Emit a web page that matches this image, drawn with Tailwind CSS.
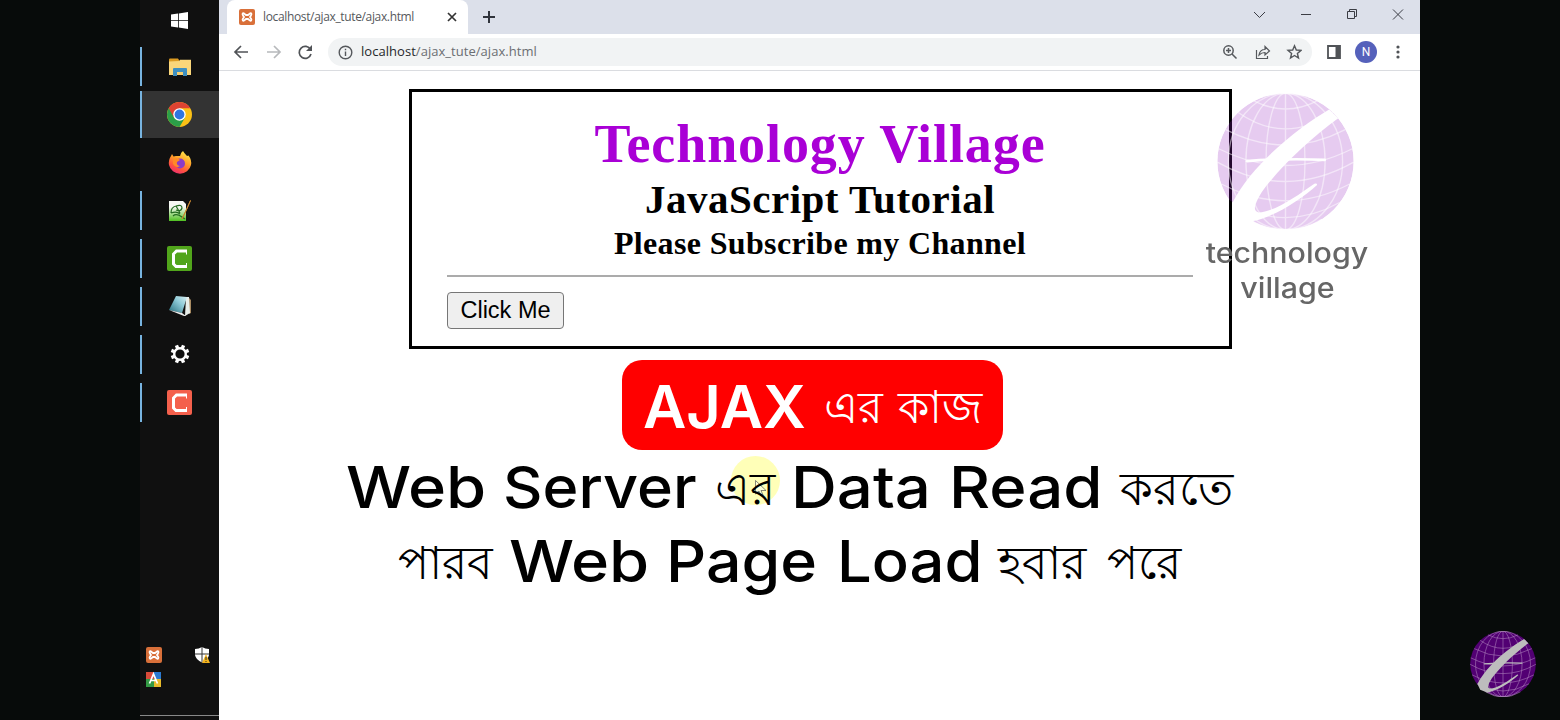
<!DOCTYPE html>
<html lang="en">
<head>
<meta charset="utf-8">
<title>localhost/ajax_tute/ajax.html</title>
<script src="https://cdn.jsdelivr.net/npm/@tailwindcss/browser@4"></script>
</head>
<body class="w-[1560px] h-[720px] overflow-hidden bg-[#070b0a] relative flex">

<svg class="absolute w-0 h-0">
  <defs>
    <g id="grid" fill="none">
      <ellipse cx="203" cy="203" rx="58" ry="203"/><ellipse cx="203" cy="203" rx="118" ry="203"/><ellipse cx="203" cy="203" rx="170" ry="203"/>
      <path d="M203 0V406M110 23Q203 70 296 23M62 57Q203 155 344 57M25 108Q203 200 381 108M4 165Q203 265 402 165M0 205Q203 320 406 205M12 270Q203 370 394 270M42 325Q203 415 364 325M95 375Q203 440 311 375"/>
    </g>
    <g id="swoosh">
      <path d="M333 48C248 98 104 208 45 326L62 362L108 380C168 368 248 318 297 273Q298 267 289 269C238 305 168 354 123 355C103 350 112 328 133 293C188 218 278 133 360 74Z"/>
      <path d="M88 198Q200 189 321 194Q327 198 321 202Q200 197 88 206Q80 202 88 198Z"/>
    </g>
    <mask id="cut"><circle cx="203" cy="203" r="203" fill="#fff"/><use href="#swoosh" fill="#000"/><path d="M40 320L110 380L80 400L20 350Z" fill="#000"/></mask>
    <g id="xampp"><rect width="16" height="16" rx="2" fill="#d9703a"/><path d="M5.200 4.600C3.800 3.600 3 5 4 6.400L5 8L4 9.600C3 11.200 4 12.400 5.300 11.400L7 10H9L10.700 11.400C12 12.400 13 11.200 12 9.600L11 8L12 6.400C13 5 12.200 3.600 10.800 4.600L9 6H7Z" fill="none" stroke="#fff" stroke-width="1.800"/></g>
    <g id="camtasia"><path d="M20 5H9.500L6.500 8V18L9 20.500H20" fill="none" stroke="#fff" stroke-width="3"/><path d="M19.500 5V8.500M19.500 17V20.500" stroke="#fff" stroke-width="1"/></g>
  </defs>
</svg>

<!-- Taskbar -->
<aside class="ml-[140px] w-[79px] h-full bg-[#101010] shrink-0 flex flex-col">
  <div class="h-[43px] flex justify-center items-center">
    <svg class="w-[17px] h-[17px] -mt-[3px]" viewBox="0 0 17 17" fill="#fff"><path d="M0 2.500L7 1.500V8H0ZM7.800 1.400L17 0V8H7.800ZM0 8.800H7V15.500L0 14.500ZM7.800 8.800H17V17L7.800 15.600Z"/></svg>
  </div>
  <div class="h-12 flex items-center justify-center relative">
    <span class="absolute left-0 top-1 w-0.5 h-[39px] bg-[#78b4e0]"></span>
    <svg class="w-[22px] h-[19px]" viewBox="0 0 22 19"><path d="M0 1.500Q0 .5 1 .5H9L10 2V17H0Z" fill="#dc9b22"/><path d="M0 3.500L10 3L11 1.800H22V17H0Z" fill="#fad67a"/><path d="M4 18V11Q4 10 5 10H17Q18 10 18 11V18H14V14H8V18Z" fill="#3e8fc0"/><path d="M8 17V14H14V17Z" fill="#f6cf70"/></svg>
  </div>
  <div class="h-[47px] flex items-center justify-center bg-[#333] relative">
    <span class="absolute left-0 top-0 w-0.5 h-full bg-[#78b4e0]"></span>
    <svg class="w-[25px] h-[25px]" viewBox="0 0 24 24"><circle cx="12" cy="12" r="12" fill="#fbc116"/><path d="M12 12L1.610 6A12 12 0 0 0 12 24L17.200 15Z" fill="#2b9f48"/><path d="M12 6H22.400A12 12 0 0 0 1.610 6L6.800 15L12 12Z" fill="#dd4332"/><circle cx="12" cy="12" r="6" fill="#fff"/><circle cx="12" cy="12" r="4.700" fill="#2f75e0"/></svg>
  </div>
  <div class="h-12 flex items-center justify-center pt-0.5">
    <svg class="w-6 h-6" viewBox="0 0 24 24"><defs><linearGradient id="fx" x1=".8" y1="0" x2=".3" y2="1"><stop offset="0" stop-color="#fff04e"/><stop offset=".45" stop-color="#ff9a28"/><stop offset=".75" stop-color="#ff5140"/><stop offset="1" stop-color="#ec2f70"/></linearGradient></defs><path d="M15 0Q16 2 19 5L20.500 4.500Q24 9 23 14A11.300 11.300 0 0 1 1 14Q.2 9 3 5L4 3L5.500 5.500L8 5Q11 5 12 5Q13 1 15 0Z" fill="url(#fx)"/><circle cx="12" cy="12.500" r="5" fill="#8a3bc8"/><path d="M5 8Q10 6 12 9L9 11Q8 14 12 15Q8 18 5 13Z" fill="#ff8a26"/></svg>
  </div>
  <div class="h-12 flex items-center justify-center relative pt-0.5">
    <span class="absolute left-0 top-[5px] w-0.5 h-[39px] bg-[#78b4e0]"></span>
    <svg class="w-6 h-[22px]" viewBox="0 0 24 22"><defs><linearGradient id="np" x1="0" y1="0" x2="0" y2="1"><stop offset=".3" stop-color="#f6f8f4"/><stop offset="1" stop-color="#4fc020"/></linearGradient></defs><path d="M1 1H15L18 4V21H1Z" fill="url(#np)"/><path d="M3 13Q3 7 8 6Q14 4 14 8Q13 12 8 10M3 13Q9 11 12 14M8 6L12 13M5 16Q8 13 14 17L17 19" fill="none" stroke="#246b20" stroke-width="1.200"/><path d="M22.500 .5L15 17L14 19L17.500 12Z" fill="#d89434" stroke="#c98630"/></svg>
  </div>
  <div class="h-12 flex items-center justify-center relative">
    <span class="absolute left-0 top-[5px] w-0.5 h-[39px] bg-[#78b4e0]"></span>
    <svg class="w-[25px] h-[25px]" viewBox="0 0 25 25"><rect width="25" height="25" rx="2" fill="#51a51b"/><use href="#camtasia"/></svg>
  </div>
  <div class="h-12 flex items-center justify-center relative">
    <span class="absolute left-0 top-[5px] w-0.5 h-[39px] bg-[#78b4e0]"></span>
    <svg class="w-[22px] h-[22px]" viewBox="0 0 22 22"><defs><linearGradient id="nt" x1="0" y1="1" x2="1" y2="0"><stop offset="0" stop-color="#256d7c"/><stop offset=".6" stop-color="#8fcbd8"/><stop offset="1" stop-color="#d9f0f2"/></linearGradient></defs><path d="M20 3L22 5V18L20 19Z" fill="#a98b62"/><path d="M17 2H20L21 18L16 21Z" fill="#e8eeea"/><path d="M7 1L18 2L13 18L0 15Z" fill="url(#nt)"/><path d="M0 15L13 18L17 21L15 21Z" fill="#eee"/></svg>
  </div>
  <div class="h-12 flex items-center justify-center relative">
    <span class="absolute left-0 top-[5px] w-0.5 h-[39px] bg-[#78b4e0]"></span>
    <svg class="w-5 h-5" viewBox="-10 -10 20 20" fill="none" stroke="#fff"><circle r="5.800" stroke-width="2.400"/><g stroke-width="3.400"><path d="M0 -6V-9.300M0 6V9.300M6 0H9.300M-6 0H-9.300" transform="rotate(22.500)"/><path d="M0 -6V-9.300M0 6V9.300M6 0H9.300M-6 0H-9.300" transform="rotate(67.500)"/></g></svg>
  </div>
  <div class="h-12 flex items-center justify-center relative">
    <span class="absolute left-0 top-[5px] w-0.5 h-[39px] bg-[#78b4e0]"></span>
    <svg class="w-[25px] h-[25px]" viewBox="0 0 25 25"><rect width="25" height="25" rx="2" fill="#f4604c"/><use href="#camtasia"/></svg>
  </div>
  <div class="mt-auto mb-7 px-1.5 grid grid-cols-[48px_16px] gap-y-2">
    <svg class="w-4 h-4" viewBox="0 0 16 16"><use href="#xampp"/></svg>
    <svg class="w-4 h-4" viewBox="0 0 16 16"><path d="M8 0Q11 2 15 2V8Q14 13 8 15.500Q2 13 1 8V2Q5 2 8 0Z" fill="#fff"/><path d="M8 0V16M1 7H15" stroke="#333"/><path d="M12 7L16 16H8Z" fill="#f3b31e"/><path d="M12 10V13M12 14V15" stroke="#332"/></svg>
    <svg class="w-4 h-4" viewBox="0 0 16 16"><path d="M0 1H8V8H0Z" fill="#d94b3a"/><path d="M8 1H15V8H8Z" fill="#2b79cf"/><path d="M0 8H8V16H0Z" fill="#349a45"/><path d="M8 8H15V16H8Z" fill="#e8ba2a"/><path d="M3.500 12.500L7.500 3L11.500 12.500M5 9.500H10" fill="none" stroke="#fff" stroke-width="1.700"/></svg>
  </div>
  <div class="h-[5px] border-t border-[#888] shrink-0"></div>
</aside>

<!-- Browser window -->
<section class="w-[1201px] h-full bg-white shrink-0 flex flex-col">
  <div class="h-[34px] bg-[#dce0ea] flex items-start shrink-0">
    <div class="ml-2 w-[241px] h-full bg-white rounded-t-lg flex items-center pl-3 pr-[11px]">
      <svg class="w-4 h-4 shrink-0" viewBox="0 0 16 16"><use href="#xampp"/></svg>
      <span class="ml-2 text-[12px] tracking-[-0.350px] text-[#55585c] font-['Open_Sans',sans-serif] whitespace-nowrap">localhost/ajax_tute/ajax.html</span>
      <svg class="ml-auto w-2.5 h-2.5 shrink-0" viewBox="0 0 10 10" stroke="#333" stroke-width="1.700"><path d="M1 1L9 9M9 1L1 9"/></svg>
    </div>
    <svg class="ml-[15px] mt-[11px] w-3 h-3" viewBox="0 0 12 12" stroke="#30343c" stroke-width="2"><path d="M6 0V12M0 6H12"/></svg>
    <svg class="ml-auto mr-3.5 mt-2 w-[158px] h-3" viewBox="0 0 158 12" fill="none" stroke="#3b3d44"><path d="M6 4L11.500 9.500L17 4M53 6.500H63M99.500 3.500H106.500V10.500H99.500ZM101.500 3V1.500H108.500V8.500H107M145 1.500L155 11.500M155 1.500L145 11.500"/></svg>
  </div>
  <div class="h-[37px] border-b border-[#dadce0] flex items-center shrink-0">
    <svg class="ml-[14px] w-20 h-4" viewBox="0 0 80 16" fill="none" stroke-width="1.700"><path d="M15 8H2M8 2L2 8L8 14" stroke="#505357"/><path d="M34 8H47M41 2L47 8L41 14" stroke="#b7b9bc"/><path d="M77.500 5.500A6 6 0 1 0 78 10" stroke="#505357"/><path d="M79 1V7H73Z" fill="#505357"/></svg>
    <div class="ml-[15px] w-[984px] h-7 rounded-full bg-[#f1f3f4] flex items-center pl-2.5 pr-2.5">
      <svg class="w-[15px] h-[15px]" viewBox="0 0 15 15" fill="none" stroke="#55585c" stroke-width="1.400"><circle cx="7.500" cy="7.500" r="6.300"/><path d="M7.500 6.500V11M7.500 3.800V5.300"/></svg>
      <span class="ml-2 text-[13px] text-[#6b6e72] font-['Open_Sans',sans-serif] tracking-[0.040px] whitespace-nowrap"><span class="text-[#26282b]">localhost</span>/ajax_tute/ajax.html</span>
      <svg class="ml-auto w-20 h-4" viewBox="0 0 80 16" fill="none" stroke="#55585c" stroke-width="1.500"><circle cx="6.500" cy="6.500" r="4.700"/><path d="M10 10L14.500 14.500M4 6.500H9M6.500 4V9"/><path d="M34.500 6V14.500H45.500V12M37 11Q38 5.500 43 5.500V2.500L47.500 7L43 11V8.500Q39.500 8.500 37 11Z" stroke-width="1.200"/><path d="M72.500 1.800L74.300 6L79 6.400L75.400 9.400L76.500 14L72.500 11.500L68.500 14L69.600 9.400L66 6.400L70.700 6Z" stroke-width="1.400"/></svg>
    </div>
    <svg class="ml-[15px] w-3.5 h-3.5" viewBox="0 0 14 14"><path d="M1 1H13V13H1Z" fill="none" stroke="#505357" stroke-width="1.800"/><path d="M8.500 1H13V13H8.500Z" fill="#505357"/></svg>
    <span class="ml-3.5 w-[22px] h-[22px] rounded-full bg-[#5561bb] text-white text-[12px] flex items-center justify-center font-['Roboto',sans-serif]">N</span>
    <svg class="ml-[19px] w-1 h-3.5" viewBox="0 0 4 14" fill="#505357"><circle cx="2" cy="2" r="1.600"/><circle cx="2" cy="7" r="1.600"/><circle cx="2" cy="12" r="1.600"/></svg>
  </div>

  <main class="flex flex-col pt-[18px]">
    <div class="ml-[190px] w-[823px] h-[260px] border-[3px] border-black pl-[35px] pr-9 pt-6 flex flex-col font-['Liberation_Serif',serif] font-bold text-center text-black">
      <h1 class="text-[54px] leading-[56px] tracking-[0.920px] text-[#a900d6] whitespace-nowrap">Technology Village</h1>
      <h2 class="text-[41px] leading-[54px] tracking-[0.500px] whitespace-nowrap">JavaScript Tutorial</h2>
      <h3 class="-mt-px text-[32px] leading-9 tracking-[0.350px] whitespace-nowrap">Please Subscribe my Channel</h3>
      <div class="mt-[14px] h-0.5 bg-[#ababab] shrink-0"></div>
      <button class="mt-[15px] w-[117px] h-[37px] border border-[#767676] rounded bg-[#efefef] font-['Liberation_Sans',sans-serif] font-normal text-[23.500px] shrink-0">Click Me</button>
    </div>
    <div class="mt-[11px] ml-[403px] w-[381px] h-[90px] bg-[#ff0000] rounded-[20px] flex items-center pl-[21px] text-white font-['Inter','Noto_Sans',sans-serif] whitespace-nowrap">
      <span class="w-[181px] pt-1 text-[59px] font-semibold origin-left scale-x-[1.01]">AJAX</span><span class="w-[74px] pt-1 text-[45px] font-medium">এর</span><span class="pt-1 text-[45px] font-medium">কাজ</span>
    </div>
    <div class="relative">
      <div class="absolute left-[512px] top-[6px] w-[49px] h-[49px] rounded-full bg-[#ffffb8]"></div>
      <svg class="absolute left-[536px] top-[30px] w-3 h-[17px]" viewBox="0 0 12 17"><path d="M.5 .5V14L4 11L6 16L8 15L6 10.500H11Z" fill="#ffffd8" stroke="#555" stroke-width=".7"/></svg>
      <div class="relative ml-[127px] h-[74px] flex items-center text-black font-['Inter','Noto_Sans',sans-serif] font-medium text-[58px] whitespace-nowrap">
        <span class="w-[157px] origin-left scale-x-[1.12]">Web</span><span class="w-[212px] origin-left scale-x-[1.055]">Server</span><span class="w-[76px] pt-0.5 text-[46px]">এর</span><span class="w-[158px] origin-left scale-x-[1.095]">Data</span><span class="w-[171px] origin-left scale-x-[1.095]">Read</span><span class="pt-0.5 text-[47px]">করতে</span>
      </div>
      <div class="relative ml-[179px] h-[74px] flex items-center text-black font-['Inter','Noto_Sans',sans-serif] font-medium text-[58px] whitespace-nowrap">
        <span class="w-[111px] pt-0.5 text-[46px]">পারব</span><span class="w-[157px] origin-left scale-x-[1.12]">Web</span><span class="w-[171px] origin-left scale-x-[1.08]">Page</span><span class="w-[161px] origin-left scale-x-[1.06]">Load</span><span class="w-[109px] pt-0.5 text-[46px]">হবার</span><span class="pt-0.5 text-[46px]">পরে</span>
      </div>
    </div>
  </main>
</section>

<!-- Channel watermark over the page -->
<div class="absolute left-[1200px] top-[93px] w-[174px] flex flex-col items-center font-['Inter',sans-serif] font-medium text-[28px] leading-[35px] text-[#666]">
  <svg class="w-[137px] h-[137px] -ml-1" viewBox="-1 -1 408 408"><g mask="url(#cut)"><circle cx="203" cy="203" r="203" fill="#9420bd" fill-opacity=".23"/><use href="#grid" stroke="#fff" stroke-opacity=".5" stroke-width="4"/></g></svg>
  <span class="mt-1.5 scale-x-[1.085]">technology</span><span class="scale-x-[1.085]">village</span>
</div>
<svg class="absolute left-[1470px] top-[631px] w-[66px] h-[66px]" viewBox="-1 -1 408 408"><circle cx="203" cy="203" r="203" fill="#520073"/><use href="#grid" stroke="#b58bc2" stroke-opacity=".65" stroke-width="5"/><use href="#swoosh" fill="#bdbdbd"/></svg>
</body>
</html>
